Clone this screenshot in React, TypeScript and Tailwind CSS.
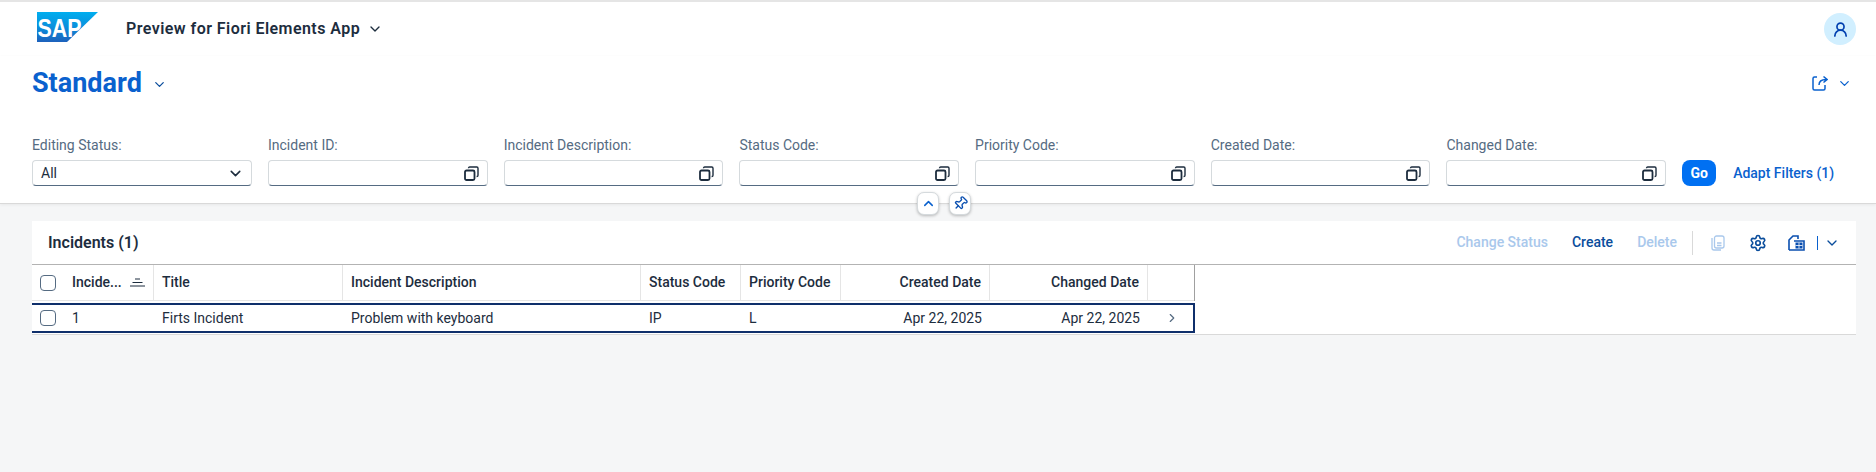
import { ChevronDown, ChevronRight, ChevronUp, Pin, Settings, UserRound } from 'lucide-react'

const filters = ['Incident ID:', 'Incident Description:', 'Status Code:', 'Priority Code:', 'Created Date:', 'Changed Date:']

const cols = 'grid grid-cols-[40px_82px_189px_298px_100px_100px_149px_158px_47px]'

function ValueHelpIcon() {
  return (
    <svg width="15" height="15" viewBox="0 0 15 15" fill="none" stroke="#1d2d3e" strokeWidth="1.4" className="shrink-0">
      <rect x="1" y="4.5" width="9.5" height="9.5" rx="1.5" strokeWidth="1.8" />
      <path d="M4.5 2.2V2a1.2 1.2 0 0 1 1.2-1h7.1A1.2 1.2 0 0 1 14 2.2v7.1a1.2 1.2 0 0 1-1.2 1.2h-.2" />
    </svg>
  )
}

function SapLogo() {
  return (
    <svg width="61" height="31" viewBox="0 0 61 31" className="mt-[-3px]">
      <defs>
        <linearGradient id="sapfill" x1="0" y1="0" x2="0" y2="1">
          <stop offset="0" stopColor="#00aeef" />
          <stop offset="0.5" stopColor="#0a8fdc" />
          <stop offset="1" stopColor="#1d61bc" />
        </linearGradient>
      </defs>
      <polygon points="0,0 61,0 30,30 0,30" fill="url(#sapfill)" />
      <text x="0.5" y="25" fontFamily="Liberation Sans, sans-serif" fontWeight="700" fontSize="26" fill="#fff" textLength="44" lengthAdjust="spacingAndGlyphs">
        SAP
      </text>
    </svg>
  )
}

function ShareIcon() {
  return (
    <svg width="16" height="16" viewBox="0 0 16 16" fill="none" stroke="#0a61ce" strokeWidth="1.5">
      <path d="M5 2H2.5A1.5 1.5 0 0 0 1 3.5v10A1.5 1.5 0 0 0 2.5 15h9a1.5 1.5 0 0 0 1.5-1.5V10" />
      <path d="M7 10c0-3.5 2-5.5 7-5.5M11.5 1.5l3.5 3-3.5 3" />
    </svg>
  )
}

function CopyIcon() {
  return (
    <svg width="14" height="16" viewBox="0 0 14 16" fill="none" stroke="#a9c8ec" strokeWidth="1.3">
      <path d="M1 3v10a2 2 0 0 0 2 2h7" />
      <rect x="3.5" y="1" width="9.5" height="12" rx="2" />
      <path d="M6 8h4.5M6 10.5h4.5" />
    </svg>
  )
}

function ExportIcon() {
  return (
    <svg width="17" height="16" viewBox="0 0 17 16" fill="none">
      <path d="M1 15V5l4-4h5v3" stroke="#0a4fb0" strokeWidth="1.6" />
      <path d="M1 15h15V6H6" stroke="#0a4fb0" strokeWidth="1.6" />
      <path d="M7.5 7.5h7v6h-7z" fill="#0a4fb0" />
      <path d="M7.5 10.5h7M11 7.5v6" stroke="#fff" strokeWidth="0.8" />
    </svg>
  )
}

function Checkbox() {
  return <div className="h-[16px] w-[16px] rounded-[4px] border border-[#556b82] bg-white" />
}

function HeaderCell({ children, right }: { children?: React.ReactNode; right?: boolean }) {
  return (
    <div className={`flex items-center whitespace-nowrap border-r border-[#e5e5e5] px-2 text-[14px] font-medium text-[#1d2d3e] ${right ? 'justify-end' : ''}`}>
      {children}
    </div>
  )
}

export default function App() {
  return (
    <div className="flex h-[472px] w-[1876px] flex-col overflow-hidden bg-[#f5f6f7] font-['Roboto','Noto_Sans',sans-serif] text-[#1d2d3e]">
      {/* shell bar */}
      <div className="flex h-[56px] shrink-0 items-center border-t-2 border-[#e5e5e5] bg-white pl-[37px] pr-[20px]">
        <SapLogo />
        <span className="ml-[28px] text-[16px] font-semibold tracking-[0.45px]">Preview for Fiori Elements App</span>
        <ChevronDown size={16} strokeWidth={2} className="ml-[7px]" />
        <div className="ml-auto flex h-8 w-8 items-center justify-center rounded-full bg-[#d1efff]">
          <UserRound size={17} strokeWidth={2.4} className="text-[#0040b0]" />
        </div>
      </div>

      {/* page header */}
      <div className="relative h-[148px] shrink-0 border-b border-[#d9d9d9] bg-white px-8 pt-[14px] shadow-[0_1px_3px_rgba(0,0,0,0.06)]">
        <div className="flex h-[26px] items-center">
          <span className="text-[27px] font-bold leading-none text-[#0a61ce]">Standard</span>
          <ChevronDown size={15} strokeWidth={2} className="ml-[10px] mt-[3px] text-[#0a4d9c]" />
          <div className="ml-auto mr-[-8px] flex items-center gap-[9px]">
            <ShareIcon />
            <ChevronDown size={15} strokeWidth={2} className="text-[#0a61ce]" />
          </div>
        </div>

        <div className="mt-[40px] flex items-end">
          <div className="w-[220px]">
            <div className="mb-[6px] text-[14px] leading-[18px] text-[#556b82]">Editing Status:</div>
            <div className="flex h-[26px] items-center justify-between rounded-[4px] border border-[#d5dadd] border-b-[#556b82] bg-white pl-2 pr-[7px] text-[14px]">
              All
              <ChevronDown size={17} strokeWidth={2.2} />
            </div>
          </div>
          {filters.map((label) => (
            <div key={label} className="ml-[16px] w-[219.7px]">
              <div className="mb-[6px] text-[14px] leading-[18px] text-[#556b82]">{label}</div>
              <div className="flex h-[26px] items-center justify-end rounded-[4px] border border-[#d5dadd] border-b-[#556b82] bg-white pr-[8px]">
                <ValueHelpIcon />
              </div>
            </div>
          ))}
          <button className="ml-[16px] h-[26px] w-[34px] rounded-[8px] bg-[#0070f2] text-[14px] font-bold text-white">Go</button>
          <span className="ml-[17px] flex h-[26px] items-center text-[14px] font-medium text-[#0a61ce]">Adapt Filters (1)</span>
        </div>

        <div className="absolute left-[917px] top-[136px] flex gap-[10px]">
          <div className="flex h-[23px] w-[22px] items-center justify-center rounded-[7px] border border-[#d5dadd] bg-white shadow-[0_1px_3px_rgba(0,0,0,0.25)]">
            <ChevronUp size={15} strokeWidth={2.4} className="text-[#0a61ce]" />
          </div>
          <div className="flex h-[23px] w-[22px] items-center justify-center rounded-[7px] border border-[#d5dadd] bg-white shadow-[0_1px_3px_rgba(0,0,0,0.25)]">
            <Pin size={15} strokeWidth={2.2} className="rotate-45 text-[#0a4fb0]" />
          </div>
        </div>
      </div>

      {/* table card */}
      <div className="ml-8 mr-[20px] mt-[17px] bg-white">
        <div className="flex h-[43px] items-center pl-[16px] pr-[16px]">
          <span className="text-[16px] font-semibold">Incidents (1)</span>
          <div className="ml-auto flex items-center text-[14px] font-medium">
            <span className="text-[#a9c8ec]">Change Status</span>
            <span className="ml-[24px] text-[#0a4d9c]">Create</span>
            <span className="ml-[24px] text-[#a9c8ec]">Delete</span>
            <div className="ml-[15px] h-[24px] w-px bg-[#d9d9d9]" />
            <div className="ml-[18px]"><CopyIcon /></div>
            <Settings size={18} strokeWidth={2.2} className="ml-[24px] text-[#0a4d9c]" />
            <div className="ml-[21px]"><ExportIcon /></div>
            <div className="ml-[12px] h-[14px] w-px bg-[#0a61ce]" />
            <ChevronDown size={16} strokeWidth={2} className="ml-[6px] text-[#0a4d9c]" />
          </div>
        </div>

        <div className="border-t border-[#b3b3b3]">
          <div className="w-[1163px] border-r border-[#a0a0a0]">
            <div className={`${cols} h-[36px] border-b border-[#e5e5e5]`}>
              <div className="flex items-center pl-[8px]"><Checkbox /></div>
              <div className="flex items-center justify-between whitespace-nowrap border-r border-[#e5e5e5] pr-[8px] text-[14px] font-medium">
                <span>Incide...</span>
                <svg width="15" height="9" viewBox="0 0 15 9" stroke="#1d2d3e" strokeWidth="1">
                  <path d="M5 1h5M2.5 4.5h10M0 8h15" />
                </svg>
              </div>
              <HeaderCell>Title</HeaderCell>
              <HeaderCell>Incident Description</HeaderCell>
              <HeaderCell>Status Code</HeaderCell>
              <HeaderCell>Priority Code</HeaderCell>
              <HeaderCell right>Created Date</HeaderCell>
              <HeaderCell right>Changed Date</HeaderCell>
              <div />
            </div>
          </div>
          <div className="relative w-[1163px]">
            <div className={`${cols} h-[33px] items-center pt-[1px] text-[14px]`}>
              <div className="flex pl-[8px]"><Checkbox /></div>
              <div>1</div>
              <div className="px-2">Firts Incident</div>
              <div className="px-2">Problem with keyboard</div>
              <div className="px-2">IP</div>
              <div className="px-2">L</div>
              <div className="px-2 text-right">Apr 22, 2025</div>
              <div className="px-2 text-right">Apr 22, 2025</div>
              <div className="flex justify-center"><ChevronRight size={14} strokeWidth={2} className="text-[#556b82]" /></div>
            </div>
            {/* focus frame on the row */}
            <div className="pointer-events-none absolute inset-x-0 top-[2px] bottom-[1px] border-y-[2px] border-r-[2px] border-[#0f2f6b]" />
          </div>
          <div className="h-px bg-[#d9d9d9]" />
        </div>
      </div>
    </div>
  )
}
